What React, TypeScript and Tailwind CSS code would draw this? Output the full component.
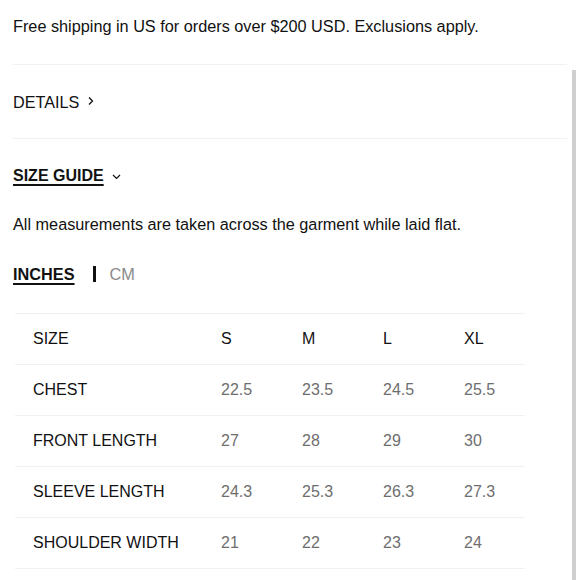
import React from "react";

const rows: { label: string; values: string[]; header?: boolean }[] = [
  { label: "SIZE", values: ["S", "M", "L", "XL"], header: true },
  { label: "CHEST", values: ["22.5", "23.5", "24.5", "25.5"] },
  { label: "FRONT LENGTH", values: ["27", "28", "29", "30"] },
  { label: "SLEEVE LENGTH", values: ["24.3", "25.3", "26.3", "27.3"] },
  { label: "SHOULDER WIDTH", values: ["21", "22", "23", "24"] },
];

export default function App() {
  return (
    <div
      className="relative w-[580px] h-[580px] overflow-hidden bg-white text-[#111] text-[16px] leading-6"
      style={{ fontFamily: '"Liberation Sans", Arial, Helvetica, sans-serif' }}
    >
      <div className="pl-[13px] pr-[13px]">
        <p className="pt-[14px] pb-[26px] border-b border-[#f1f1f1] text-[16.25px]">
          Free shipping in US for orders over $200 USD. Exclusions apply.
        </p>
        <div className="h-[74px] flex items-center gap-[9px] border-b border-[#f1f1f1]">
          <span className="text-[#111] text-[16.2px]">DETAILS</span>
          <svg width="6" height="10" viewBox="0 0 6 10" fill="none" className="mt-[-1px]">
            <path d="M1 1.5 L4.5 5 L1 8.5" stroke="#111" strokeWidth="1.3" />
          </svg>
        </div>
        <div className="mt-[25px] flex items-center gap-[8px]">
          <span className="font-bold underline decoration-[1.5px] underline-offset-[3px]">SIZE GUIDE</span>
          <svg width="9" height="6" viewBox="0 0 9 6" fill="none" className="mt-[1px]">
            <path d="M1 1 L4.5 4.5 L8 1" stroke="#111" strokeWidth="1.2" />
          </svg>
        </div>
        <p className="mt-[24px] text-[16.25px]">All measurements are taken across the garment while laid flat.</p>
        <div className="mt-[26px] flex items-center">
          <span className="font-bold underline decoration-[1.5px] underline-offset-[3px] text-[16.3px]">INCHES</span>
          <span className="ml-[18px] w-[3px] h-[16px] bg-[#111]" />
          <span className="ml-[14px] text-[#8a8a8a] text-[16.3px]">CM</span>
        </div>
        <div className="mt-[27px] ml-[2px] w-[510px] border-t border-[#f1f1f1]">
          {rows.map((r) => (
            <div
              key={r.label}
              className="grid grid-cols-[188px_81px_81px_81px_79px] h-[51px] items-center border-b border-[#f1f1f1]"
            >
              <span className="pl-[18px] text-[#111]">{r.label}</span>
              {r.values.map((v) => (
                <span key={v} className={"pl-[18px] " + (r.header ? "text-[#111]" : "text-[#6e6e6e]")}>
                  {v}
                </span>
              ))}
            </div>
          ))}
        </div>
      </div>
      <div className="absolute left-[572px] top-[70px] w-[4px] h-[510px] bg-[#cfcfcf]" />
    </div>
  );
}
